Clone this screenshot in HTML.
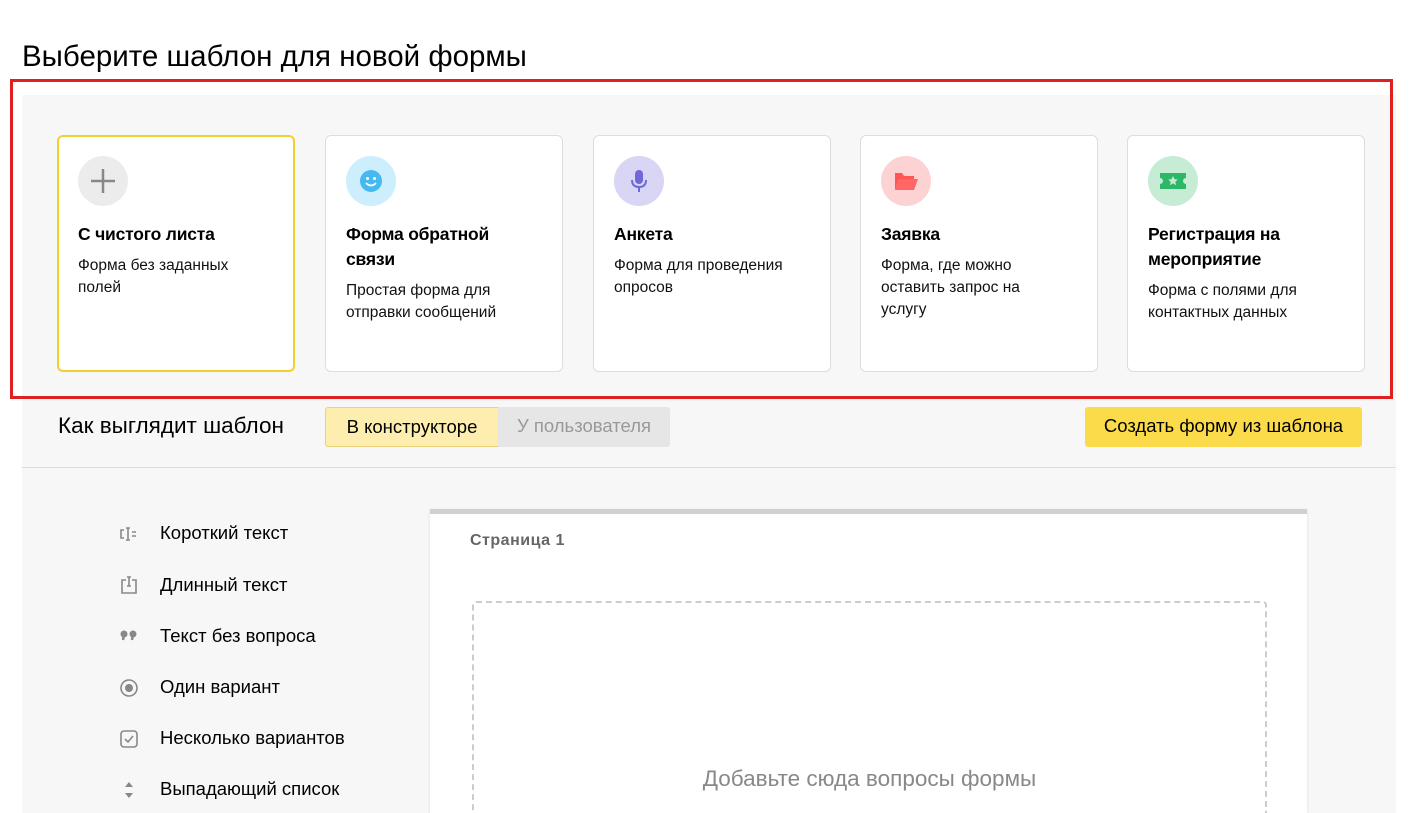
<!DOCTYPE html>
<html style="width:1421px;height:813px;overflow:hidden"><head><meta charset="utf-8"><style>
*{box-sizing:border-box;margin:0;padding:0}
body{width:1421px;height:813px;overflow:hidden;background:#fff;font-family:"Liberation Sans","Noto Sans CJK SC",sans-serif;color:#000;position:relative}
.abs{position:absolute}
h1{position:absolute;left:22px;top:40px;font-size:29.5px;font-weight:normal;white-space:nowrap}
.gray{position:absolute;left:22px;top:95px;width:1374px;height:718px;background:#f7f7f7}
.red{position:absolute;left:10px;top:79px;width:1383px;height:320px;border:3px solid #e02020}
.card{position:absolute;top:135px;width:238px;height:237px;background:#fff;border:1px solid #ddd;border-radius:6px;padding:20px 20px}
.card.sel{border:2px solid #f2cf2e;padding:19px 19px}
.ic{width:50px;height:50px;border-radius:50%;display:flex;align-items:center;justify-content:center}
.t{font-weight:bold;font-size:17.5px;line-height:25px;margin-top:16px;letter-spacing:-.2px}
.d{font-size:15.5px;line-height:22px;margin-top:8px;color:#111}
.tab{position:absolute;top:407px;height:40px;font-size:18.5px;line-height:38px;text-align:center;white-space:nowrap}
.li{position:absolute;left:160px;font-size:18.5px;white-space:nowrap}
.lic{position:absolute;left:118px;width:22px;height:20px}
</style></head><body>
<h1>Выберите шаблон для новой формы</h1>
<div class="gray"></div>
<div class="red"></div>

<div class="card sel" style="left:57px">
 <div class="ic" style="background:#ececec"><svg width="30" height="30"><path d="M15 3v24M3 15h24" stroke="#888" stroke-width="2.5"/></svg></div>
 <div class="t">С чистого листа</div><div class="d">Форма без заданных<br>полей</div></div>
<div class="card" style="left:325px">
 <div class="ic" style="background:#cdeefc"><svg width="24" height="24"><circle cx="12" cy="12" r="11" fill="#45b9f0"/><circle cx="8.5" cy="9.5" r="1.5" fill="#fff"/><circle cx="15.5" cy="9.5" r="1.5" fill="#fff"/><path d="M7 14q5 5 10 0" stroke="#fff" stroke-width="1.8" fill="none"/></svg></div>
 <div class="t">Форма обратной<br>связи</div><div class="d">Простая форма для<br>отправки сообщений</div></div>
<div class="card" style="left:593px">
 <div class="ic" style="background:#d8d6f4"><svg width="24" height="26"><rect x="8" y="2" width="8" height="14" rx="4" fill="#6f68d8"/><path d="M5 12q0 7 7 7t7-7M12 19v5" stroke="#6f68d8" stroke-width="2" fill="none"/></svg></div>
 <div class="t">Анкета</div><div class="d">Форма для проведения<br>опросов</div></div>
<div class="card" style="left:860px">
 <div class="ic" style="background:#fdd2d2"><svg width="26" height="22"><path d="M2 3h7l2 3h10v3H6L2 20z" fill="#f55"/><path d="M6 9h19l-4 11H2z" fill="#f66"/></svg></div>
 <div class="t">Заявка</div><div class="d">Форма, где можно<br>оставить запрос на<br>услугу</div></div>
<div class="card" style="left:1127px">
 <div class="ic" style="background:#c6ecd5"><svg width="28" height="20"><path d="M1 2h26v5a3 3 0 0 0 0 6v5H1v-5a3 3 0 0 0 0-6z" fill="#2cb866"/><path d="M14 5l1.5 3.2 3.4.3-2.6 2.3.8 3.4-3.1-1.8-3.1 1.8.8-3.4-2.6-2.3 3.4-.3z" fill="#c6ecd5"/></svg></div>
 <div class="t">Регистрация на<br>мероприятие</div><div class="d">Форма с полями для<br>контактных данных</div></div>

<div class="abs" style="left:58px;top:413px;font-size:22.5px">Как выглядит шаблон</div>
<div class="tab" style="left:325px;width:174px;background:#fdeeb0;border:1px solid #e9d27a;border-radius:3px 0 0 3px">В конструкторе</div>
<div class="tab" style="left:498px;width:172px;background:#e6e6e6;color:#999;border-radius:0 3px 3px 0">У пользователя</div>
<div class="tab" style="left:1085px;width:277px;background:#fcdb4b;border-radius:3px">Создать форму из шаблона</div>
<div class="abs" style="left:22px;top:467px;width:1374px;height:1px;background:#ddd"></div>

<svg class="lic" style="top:524px" viewBox="0 0 22 20"><path d="M6 6h-3v8h3M10 4v12M8 4h4M8 16h4M14 8h4M14 12h4" stroke="#888" stroke-width="1.6" fill="none"/></svg>
<div class="li" style="top:522px">Короткий текст</div>
<svg class="lic" style="top:575px" viewBox="0 0 22 20"><path d="M8 5H4v13h14V5h-4M11 2v9M9 2h4M9 11h4" stroke="#888" stroke-width="1.6" fill="none"/></svg>
<div class="li" style="top:574px">Длинный текст</div>
<svg class="lic" style="top:626px" viewBox="0 0 22 20"><circle cx="6" cy="8" r="3.5" fill="#888"/><circle cx="15" cy="8" r="3.5" fill="#888"/><path d="M6 8l-1 6M15 8l-1 6" stroke="#888" stroke-width="2.5"/></svg>
<div class="li" style="top:625px">Текст без вопроса</div>
<svg class="lic" style="top:678px" viewBox="0 0 22 20"><circle cx="11" cy="10" r="8" stroke="#888" stroke-width="1.6" fill="none"/><circle cx="11" cy="10" r="4" fill="#888"/></svg>
<div class="li" style="top:676px">Один вариант</div>
<svg class="lic" style="top:729px" viewBox="0 0 22 20"><rect x="3" y="2" width="16" height="16" rx="3" stroke="#888" stroke-width="1.6" fill="none"/><path d="M7 10l3 3 5-6" stroke="#888" stroke-width="1.6" fill="none"/></svg>
<div class="li" style="top:727px">Несколько вариантов</div>
<svg class="lic" style="top:780px" viewBox="0 0 22 20"><path d="M11 2l4 5H7zM11 18l4-5H7z" fill="#888"/></svg>
<div class="li" style="top:778px">Выпадающий список</div>

<div class="abs" style="left:430px;top:509px;width:877px;height:304px;background:#fff;border-top:5px solid #d0d0d0;box-shadow:0 1px 3px rgba(0,0,0,.1)"></div>
<div class="abs" style="left:470px;top:532px;font-size:16px;font-weight:bold;color:#666;letter-spacing:.5px">Страница 1</div>
<div class="abs" style="left:472px;top:601px;width:795px;height:212px;border:2px dashed #ccc;border-bottom:none;border-radius:4px 4px 0 0"></div>
<div class="abs" style="left:472px;top:766px;width:795px;text-align:center;font-size:22.5px;color:#888">Добавьте сюда вопросы формы</div>
</body></html>
